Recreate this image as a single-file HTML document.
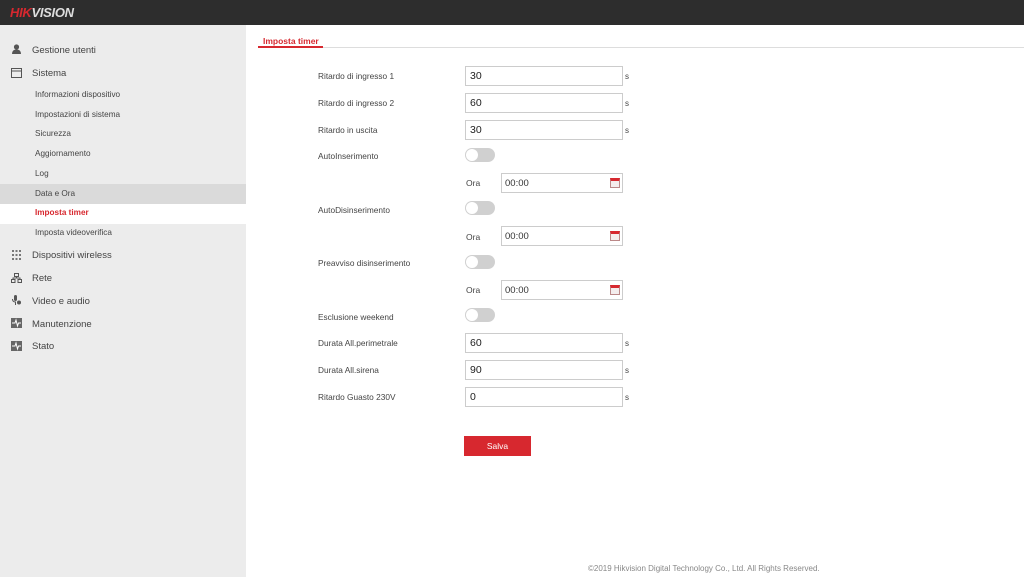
<!DOCTYPE html>
<html><head><meta charset="utf-8"><style>
*{margin:0;padding:0;box-sizing:border-box}
body{width:1024px;height:577px;position:relative;overflow:hidden;background:#fff;font-family:"Liberation Sans",Arial,sans-serif;color:#444}
.hdr{position:absolute;left:0;top:0;width:1024px;height:25px;background:#2d2d2d}
.logo{position:absolute;left:10px;top:5px;font:italic bold 13px "Liberation Sans",sans-serif;letter-spacing:-0.3px;color:#ddd}
.logo b{color:#d7282f}
.side{position:absolute;left:0;top:25px;width:246px;height:552px;background:#ececec}
.it{position:absolute;left:32px;font-size:9.5px;color:#444}
.sub{position:absolute;left:35px;font-size:8.2px;color:#444}
.ic{position:absolute;left:11px;width:11px;height:10px}
.l{position:absolute;left:318px;font-size:8.3px;color:#444}
.in{position:absolute;left:465px;width:158px;height:20px;border:1px solid #ccc;font-size:10.5px;color:#222;padding:3px 4px}
.s{position:absolute;left:625px;font-size:8px;color:#444}
.tg{position:absolute;left:465px;width:30px;height:14px;border-radius:7px;background:#d0d0d0}
.tg:after{content:"";position:absolute;left:1px;top:1px;width:12px;height:12px;border-radius:6px;background:#fff}
.ora{position:absolute;left:466px;font-size:8.5px;color:#444}
.tm{position:absolute;left:501px;width:122px;height:20px;border:1px solid #ccc;font-size:9.5px;color:#333;padding:4px 3px}
.cal{position:absolute;right:2px;top:4px;width:10px;height:10px;border:1px solid #b88;border-top:3px solid #d7282f;background:#f4eded}
</style></head><body>
<div class="hdr"><div class="logo"><b>HIK</b>VISION</div></div>
<div class="side">
<div style="position:absolute;left:0;top:159px;width:246px;height:20px;background:#dadada"></div>
<div style="position:absolute;left:0;top:179px;width:246px;height:20px;background:#fff"></div>
</div>
<svg class="ic" style="top:44px" viewBox="0 0 11 10"><circle cx="5.5" cy="3" r="2.6" fill="#555"/><path d="M1 10 Q1 5.5 5.5 5.5 Q10 5.5 10 10Z" fill="#555"/></svg>
<div class="it" style="top:45px">Gestione utenti</div>
<svg class="ic" style="top:68px" viewBox="0 0 11 10"><rect x=".5" y=".5" width="10" height="9" fill="none" stroke="#555"/><line x1="0" y1="3" x2="11" y2="3" stroke="#555"/></svg>
<div class="it" style="top:68px">Sistema</div>
<div class="sub" style="top:90px">Informazioni dispositivo</div>
<div class="sub" style="top:110px">Impostazioni di sistema</div>
<div class="sub" style="top:129px">Sicurezza</div>
<div class="sub" style="top:149px">Aggiornamento</div>
<div class="sub" style="top:169px">Log</div>
<div class="sub" style="top:189px">Data e Ora</div>
<div class="sub" style="top:208px;color:#d7282f;font-weight:bold">Imposta timer</div>
<div class="sub" style="top:228px">Imposta videoverifica</div>
<svg class="ic" style="top:250px" viewBox="0 0 11 10"><g fill="#777"><rect x="1" y="0" width="2" height="2"/><rect x="4.5" y="0" width="2" height="2"/><rect x="8" y="0" width="2" height="2"/><rect x="1" y="4" width="2" height="2"/><rect x="4.5" y="4" width="2" height="2"/><rect x="8" y="4" width="2" height="2"/><rect x="1" y="8" width="2" height="2"/><rect x="4.5" y="8" width="2" height="2"/><rect x="8" y="8" width="2" height="2"/></g></svg>
<div class="it" style="top:250px">Dispositivi wireless</div>
<svg class="ic" style="top:273px" viewBox="0 0 11 10"><g fill="none" stroke="#555"><rect x="3.5" y=".5" width="4" height="3"/><rect x=".5" y="6.5" width="3.5" height="3"/><rect x="7" y="6.5" width="3.5" height="3"/><path d="M5.5 3.5V5M2 6.5V5h7v1.5"/></g></svg>
<div class="it" style="top:273px">Rete</div>
<svg class="ic" style="top:295px" viewBox="0 0 11 10"><rect x="3" y="0" width="3" height="6" rx="1.5" fill="#555"/><circle cx="8" cy="7.5" r="2" fill="#555"/><path d="M1.5 4q0 3 3 3v3" stroke="#555" fill="none"/></svg>
<div class="it" style="top:296px">Video e audio</div>
<svg class="ic" style="top:318px" viewBox="0 0 11 10"><rect width="11" height="10" fill="#666"/><path d="M1 5h3l1-3 1.5 6 1-3h2.5" stroke="#fff" fill="none"/></svg>
<div class="it" style="top:319px">Manutenzione</div>
<svg class="ic" style="top:341px" viewBox="0 0 11 10"><rect width="11" height="10" fill="#666"/><path d="M1 5h3l1-3 1.5 6 1-3h2.5" stroke="#fff" fill="none"/></svg>
<div class="it" style="top:341px">Stato</div>

<div style="position:absolute;left:263px;top:36px;font-size:8.5px;font-weight:bold;color:#d7282f">Imposta timer</div>
<div style="position:absolute;left:258px;top:47px;width:766px;height:1px;background:#ddd"></div>
<div style="position:absolute;left:258px;top:46px;width:65px;height:2px;background:#d7282f"></div>

<div class="l" style="top:71px">Ritardo di ingresso 1</div><div class="in" style="top:66px">30</div><div class="s" style="top:72px">s</div>
<div class="l" style="top:98px">Ritardo di ingresso 2</div><div class="in" style="top:93px">60</div><div class="s" style="top:99px">s</div>
<div class="l" style="top:125px">Ritardo in uscita</div><div class="in" style="top:120px">30</div><div class="s" style="top:126px">s</div>
<div class="l" style="top:151px">AutoInserimento</div><div class="tg" style="top:148px"></div>
<div class="ora" style="top:178px">Ora</div><div class="tm" style="top:173px">00:00<div class="cal"></div></div>
<div class="l" style="top:205px">AutoDisinserimento</div><div class="tg" style="top:201px"></div>
<div class="ora" style="top:232px">Ora</div><div class="tm" style="top:226px">00:00<div class="cal"></div></div>
<div class="l" style="top:258px">Preavviso disinserimento</div><div class="tg" style="top:255px"></div>
<div class="ora" style="top:285px">Ora</div><div class="tm" style="top:280px">00:00<div class="cal"></div></div>
<div class="l" style="top:312px">Esclusione weekend</div><div class="tg" style="top:308px"></div>
<div class="l" style="top:338px">Durata All.perimetrale</div><div class="in" style="top:333px">60</div><div class="s" style="top:339px">s</div>
<div class="l" style="top:365px">Durata All.sirena</div><div class="in" style="top:360px">90</div><div class="s" style="top:366px">s</div>
<div class="l" style="top:392px">Ritardo Guasto 230V</div><div class="in" style="top:387px">0</div><div class="s" style="top:393px">s</div>

<div style="position:absolute;left:464px;top:436px;width:67px;height:20px;background:#d7282f;color:#fff;font-size:8.5px;text-align:center;line-height:20px">Salva</div>
<div style="position:absolute;left:588px;top:564px;font-size:8px;color:#888">©2019 Hikvision Digital Technology Co., Ltd. All Rights Reserved.</div>
</body></html>
